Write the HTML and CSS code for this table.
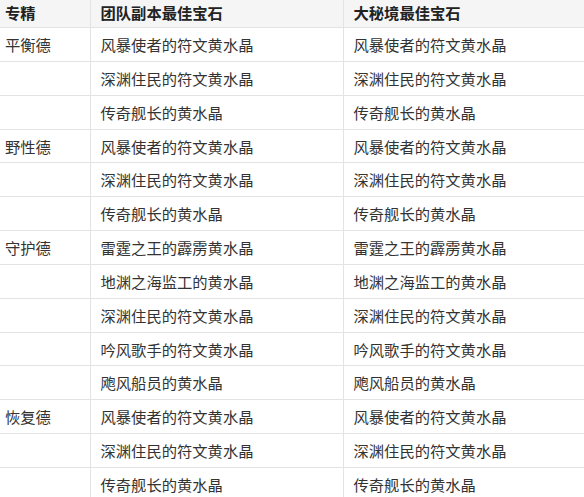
FILE: index.html
```html
<!DOCTYPE html>
<html lang="zh-CN">
<head>
<meta charset="utf-8">
<title>宝石推荐</title>
<link rel="stylesheet" href="styles.css">
</head>
<body>
<table class="gems">
  <colgroup>
    <col class="c-spec">
    <col class="c-raid">
    <col class="c-mplus">
  </colgroup>
  <thead>
    <tr><th>专精</th><th>团队副本最佳宝石</th><th>大秘境最佳宝石</th></tr>
  </thead>
  <tbody>
    <tr><td>平衡德</td><td>风暴使者的符文黄水晶</td><td>风暴使者的符文黄水晶</td></tr>
    <tr><td></td><td>深渊住民的符文黄水晶</td><td>深渊住民的符文黄水晶</td></tr>
    <tr><td></td><td>传奇舰长的黄水晶</td><td>传奇舰长的黄水晶</td></tr>
    <tr><td>野性德</td><td>风暴使者的符文黄水晶</td><td>风暴使者的符文黄水晶</td></tr>
    <tr><td></td><td>深渊住民的符文黄水晶</td><td>深渊住民的符文黄水晶</td></tr>
    <tr><td></td><td>传奇舰长的黄水晶</td><td>传奇舰长的黄水晶</td></tr>
    <tr><td>守护德</td><td>雷霆之王的霹雳黄水晶</td><td>雷霆之王的霹雳黄水晶</td></tr>
    <tr><td></td><td>地渊之海监工的黄水晶</td><td>地渊之海监工的黄水晶</td></tr>
    <tr><td></td><td>深渊住民的符文黄水晶</td><td>深渊住民的符文黄水晶</td></tr>
    <tr><td></td><td>吟风歌手的符文黄水晶</td><td>吟风歌手的符文黄水晶</td></tr>
    <tr><td></td><td>飑风船员的黄水晶</td><td>飑风船员的黄水晶</td></tr>
    <tr><td>恢复德</td><td>风暴使者的符文黄水晶</td><td>风暴使者的符文黄水晶</td></tr>
    <tr><td></td><td>深渊住民的符文黄水晶</td><td>深渊住民的符文黄水晶</td></tr>
    <tr><td></td><td>传奇舰长的黄水晶</td><td>传奇舰长的黄水晶</td></tr>
  </tbody>
</table>
</body>
</html>
```

FILE: styles.css
```css
html, body {
  margin: 0;
  padding: 0;
  background: #ffffff;
  overflow: hidden;
}

.gems {
  border-collapse: collapse;
  table-layout: fixed;
  width: 584px;
  font-family: "Noto Sans CJK SC", "Noto Sans", sans-serif;
  font-size: 15.3px;
  color: #333333;
}

.c-spec { width: 90px; }
.c-raid { width: 253px; }
.c-mplus { width: 241px; }

.gems th,
.gems td {
  text-align: left;
  padding: 6px 10px 5.85px;
  line-height: 21px;
  border: 1px solid #e3e3e3;
  white-space: nowrap;
  overflow: hidden;
}

.gems tr > :first-child {
  padding-left: 5px;
  border-left: none;
}

.gems tr > :last-child {
  border-right: none;
}

.gems thead th {
  background: #f5f5f5;
  font-weight: bold;
  color: #222222;
  padding-top: 2px;
  padding-bottom: 4px;
  border-top: none;
}
```
